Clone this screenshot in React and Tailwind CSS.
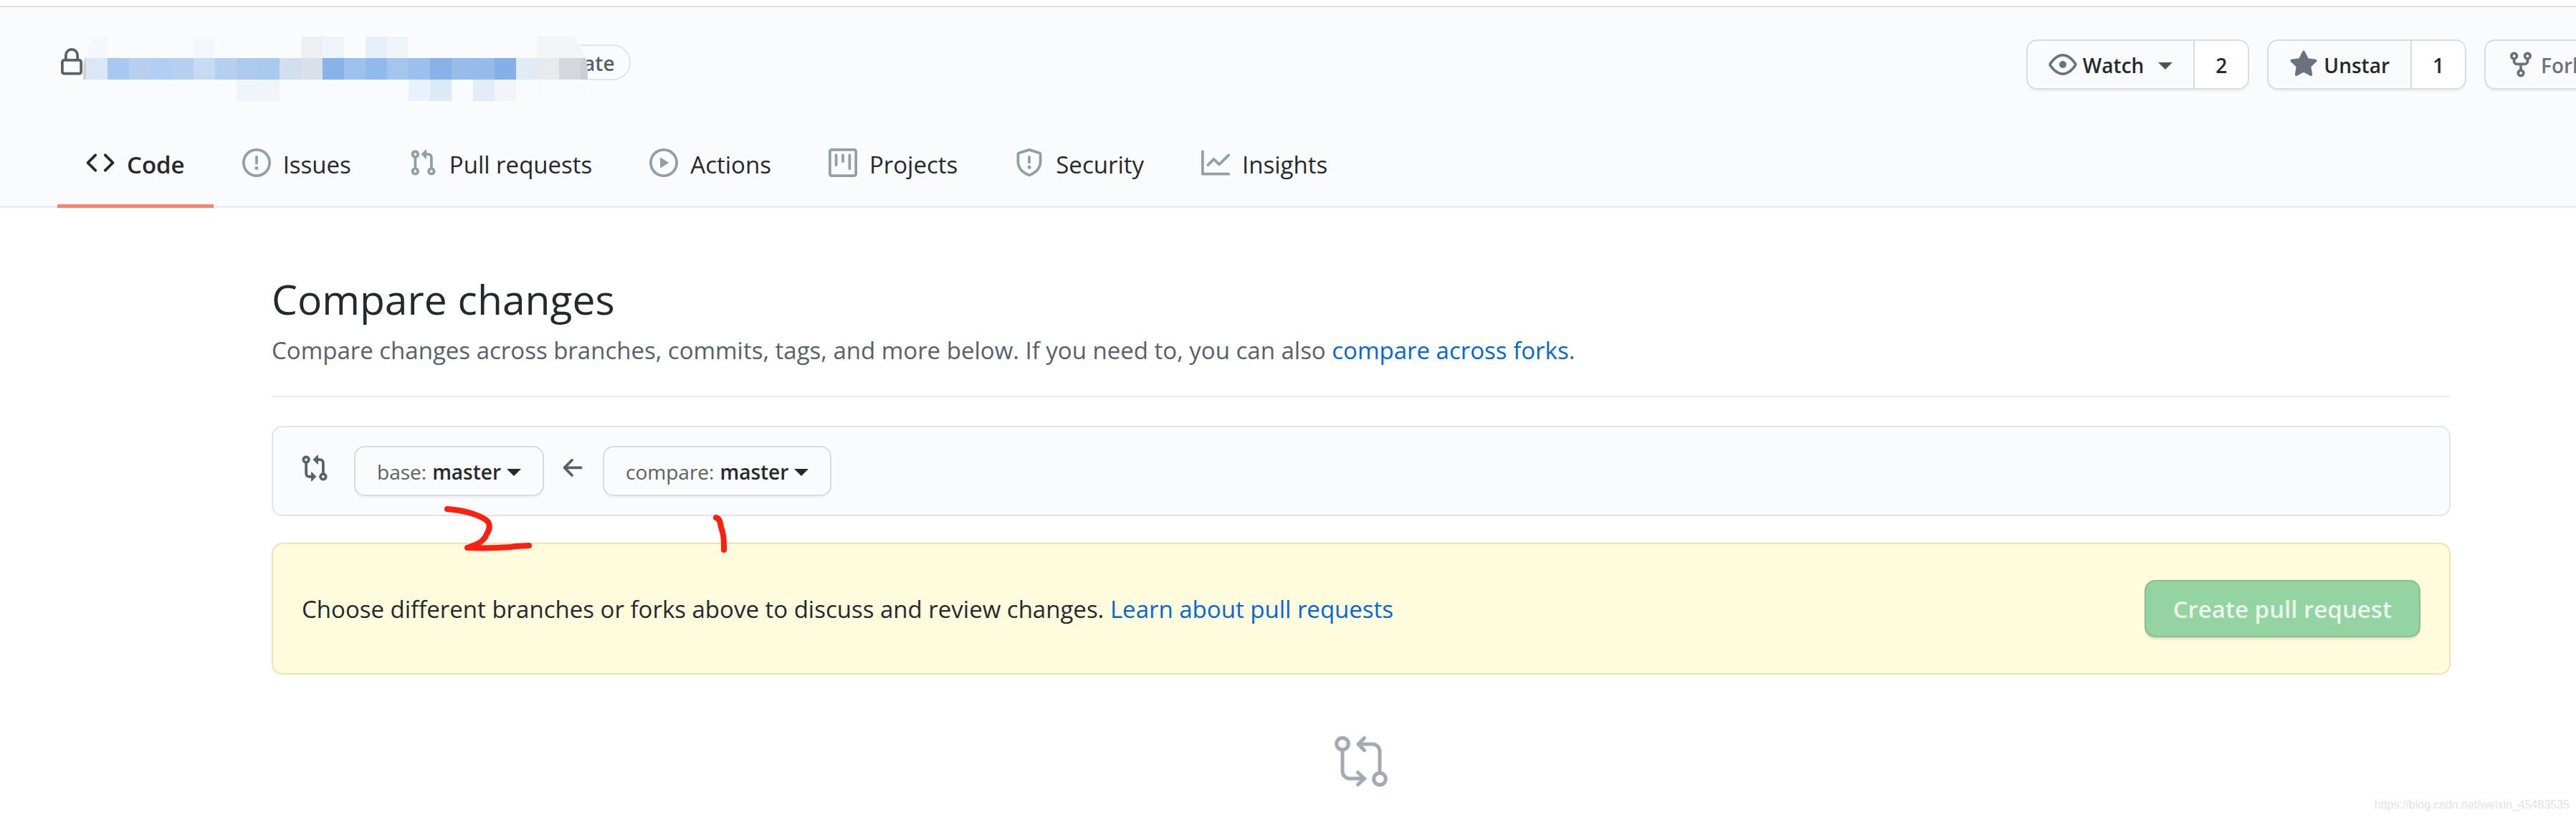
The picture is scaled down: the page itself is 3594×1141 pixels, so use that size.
import React from "react";

const ICONS = {
  lock: "M4 4v2h-.25A1.75 1.75 0 002 7.75v5.5c0 .966.784 1.75 1.75 1.75h8.5A1.75 1.75 0 0014 13.25v-5.5A1.75 1.75 0 0012.25 6H12V4a4 4 0 10-8 0zm6.5 2V4a2.5 2.5 0 10-5 0v2h5zM12 7.5h.25a.25.25 0 01.25.25v5.5a.25.25 0 01-.25.25h-8.5a.25.25 0 01-.25-.25v-5.5a.25.25 0 01.25-.25H12z",
  code: "M4.72 3.22a.75.75 0 011.06 1.06L2.06 8l3.72 3.72a.75.75 0 11-1.06 1.06L.47 8.53a.75.75 0 010-1.06l4.25-4.25zm6.56 0a.75.75 0 10-1.06 1.06L13.94 8l-3.72 3.72a.75.75 0 101.06 1.06l4.25-4.25a.75.75 0 000-1.06l-4.25-4.25z",
  issue: "M8 1.5a6.5 6.5 0 100 13 6.5 6.5 0 000-13zM0 8a8 8 0 1116 0A8 8 0 010 8zm9 3a1 1 0 11-2 0 1 1 0 012 0zm-.25-6.25a.75.75 0 00-1.5 0v3.5a.75.75 0 001.5 0v-3.5z",
  pull: "M7.177 3.073L9.573.677A.25.25 0 0110 .854v4.792a.25.25 0 01-.427.177L7.177 3.427a.25.25 0 010-.354zM3.75 2.5a.75.75 0 100 1.5.75.75 0 000-1.5zm-2.25.75a2.25 2.25 0 113 2.122v5.256a2.251 2.251 0 11-1.5 0V5.372A2.25 2.25 0 011.5 3.25zM11 2.5h-1V4h1a1 1 0 011 1v5.628a2.251 2.251 0 101.5 0V5A2.5 2.5 0 0011 2.5zm1 10.25a.75.75 0 111.5 0 .75.75 0 01-1.5 0zM3.75 12a.75.75 0 100 1.5.75.75 0 000-1.5z",
  play: "M1.5 8a6.5 6.5 0 1113 0 6.5 6.5 0 01-13 0zM8 0a8 8 0 100 16A8 8 0 008 0zM6.379 5.227A.25.25 0 006 5.442v5.117a.25.25 0 00.379.214l4.264-2.559a.25.25 0 000-.428L6.379 5.227z",
  project: "M1.75 0A1.75 1.75 0 000 1.75v12.5C0 15.216.784 16 1.75 16h12.5A1.75 1.75 0 0016 14.25V1.75A1.75 1.75 0 0014.25 0H1.75zM1.5 1.75a.25.25 0 01.25-.25h12.5a.25.25 0 01.25.25v12.5a.25.25 0 01-.25.25H1.75a.25.25 0 01-.25-.25V1.75zM11.75 3a.75.75 0 00-.75.75v7.5a.75.75 0 001.5 0v-7.5a.75.75 0 00-.75-.75zm-8.25.75a.75.75 0 011.5 0v5.5a.75.75 0 01-1.5 0v-5.5zM8 3a.75.75 0 00-.75.75v3.5a.75.75 0 001.5 0v-3.5A.75.75 0 008 3z",
  shield: "M7.467.133a1.75 1.75 0 011.066 0l5.25 1.68A1.75 1.75 0 0115 3.48V7c0 1.566-.32 3.182-1.303 4.682-.983 1.498-2.585 2.813-5.032 3.855a1.7 1.7 0 01-1.33 0c-2.447-1.042-4.049-2.357-5.032-3.855C1.32 10.182 1 8.566 1 7V3.48a1.75 1.75 0 011.217-1.667l5.25-1.68zm.61 1.429a.25.25 0 00-.153 0l-5.25 1.68a.25.25 0 00-.174.238V7c0 1.358.275 2.666 1.057 3.86.784 1.194 2.121 2.34 4.366 3.297a.2.2 0 00.154 0c2.245-.956 3.582-2.104 4.366-3.298C13.225 9.666 13.5 8.36 13.5 7V3.48a.25.25 0 00-.174-.237l-5.25-1.68zM9 10.5a1 1 0 11-2 0 1 1 0 012 0zm-.25-5.75a.75.75 0 10-1.5 0v3a.75.75 0 001.5 0v-3z",
  graph: "M1.5 1.75a.75.75 0 00-1.5 0v12.5c0 .414.336.75.75.75h14.5a.75.75 0 000-1.5H1.5V1.75zm14.28 2.53a.75.75 0 00-1.06-1.06L10 7.94 7.53 5.47a.75.75 0 00-1.06 0L3.22 8.72a.75.75 0 001.06 1.06L7 7.06l2.47 2.47a.75.75 0 001.06 0l5.25-5.25z",
  eye: "M1.679 7.932c.412-.621 1.242-1.75 2.366-2.717C5.175 4.242 6.527 3.5 8 3.5c1.473 0 2.824.742 3.955 1.715 1.124.967 1.954 2.096 2.366 2.717a.119.119 0 010 .136c-.412.621-1.242 1.75-2.366 2.717C10.825 11.758 9.473 12.5 8 12.5c-1.473 0-2.824-.742-3.955-1.715C2.92 9.818 2.09 8.69 1.679 8.068a.119.119 0 010-.136zM8 2c-1.981 0-3.67.992-4.933 2.078C1.797 5.169.88 6.423.43 7.1a1.619 1.619 0 000 1.798c.45.678 1.367 1.932 2.637 3.024C4.329 13.008 6.019 14 8 14c1.981 0 3.67-.992 4.933-2.078 1.27-1.091 2.187-2.345 2.637-3.023a1.619 1.619 0 000-1.798c-.45-.678-1.367-1.932-2.637-3.023C11.671 2.992 9.981 2 8 2zm0 8a2 2 0 100-4 2 2 0 000 4z",
  star: "M8 .25a.75.75 0 01.673.418l1.882 3.815 4.21.612a.75.75 0 01.416 1.279l-3.046 2.97.719 4.192a.75.75 0 01-1.088.791L8 12.347l-3.766 1.98a.75.75 0 01-1.088-.79l.72-4.194L.818 6.374a.75.75 0 01.416-1.28l4.21-.611L7.327.668A.75.75 0 018 .25z",
  fork: "M5 3.25a.75.75 0 11-1.5 0 .75.75 0 011.5 0zm0 2.122a2.25 2.25 0 10-1.5 0v.878A2.25 2.25 0 005.75 8.5h1.5v2.128a2.251 2.251 0 101.5 0V8.5h1.5a2.25 2.25 0 002.25-2.25v-.878a2.25 2.25 0 10-1.5 0v.878a.75.75 0 01-.75.75h-4.5A.75.75 0 015 6.25v-.878zm3.75 7.378a.75.75 0 11-1.5 0 .75.75 0 011.5 0zm3-8.75a.75.75 0 100-1.5.75.75 0 000 1.5z",
  compare: "M9.573.677L7.177 3.073a.25.25 0 000 .354l2.396 2.396A.25.25 0 0010 5.646V4h1a1 1 0 011 1v5.628a2.251 2.251 0 101.5 0V5A2.5 2.5 0 0011 2.5h-1V.854a.25.25 0 00-.427-.177zM6 12v-1.646a.25.25 0 01.427-.177l2.396 2.396a.25.25 0 010 .354l-2.396 2.396A.25.25 0 016 15.146V13.5H5A2.5 2.5 0 012.5 11V5.372a2.25 2.25 0 111.5 0V11a1 1 0 001 1h1zm6.75 0a.75.75 0 100 1.5.75.75 0 000-1.5zM4 3.25a.75.75 0 11-1.5 0 .75.75 0 011.5 0z",
  arrowLeft: "M7.78 12.53a.75.75 0 01-1.06 0L2.47 8.28a.75.75 0 010-1.06l4.25-4.25a.75.75 0 011.06 1.06L4.81 7h7.44a.75.75 0 010 1.5H4.81l2.97 2.97a.75.75 0 010 1.06z",
};

function Icon({ name, className = "" }) {
  return (
    <svg viewBox="0 0 16 16" className={`size-10 shrink-0 fill-current ${className}`} aria-hidden="true">
      <path fillRule="evenodd" d={ICONS[name]} />
    </svg>
  );
}

function Caret({ className = "" }) {
  return (
    <svg viewBox="0 0 20 10" className={`h-[10px] w-5 shrink-0 fill-current ${className}`} aria-hidden="true">
      <path d="M0 0h20L10 10z" />
    </svg>
  );
}

/* Blurred-out repository name: [row, first column, column count, colour] */
const MOSAIC = [
  [0, 0, 1, "#f4f7fd"], [0, 5, 1, "#f4f7fd"], [0, 10, 1, "#edeff4"], [0, 11, 1, "#eef4f9"],
  [0, 13, 1, "#e7f0fa"], [0, 14, 1, "#eef4f8"], [0, 20, 1, "#f9fafb"], [0, 21, 3, "#f4f5f7"],
  [1, -1, 1, "#cfd1d5"], [1, 0, 1, "#dae7f5"], [1, 1, 1, "#a9c8ef"], [1, 2, 1, "#b7d0ef"],
  [1, 3, 1, "#b1cff2"], [1, 4, 1, "#b6d1f0"], [1, 5, 1, "#c6daf3"], [1, 6, 1, "#b3d0ef"],
  [1, 7, 1, "#adcaf0"], [1, 8, 1, "#a9caef"], [1, 9, 1, "#d1e0f0"], [1, 10, 1, "#d9e0e9"],
  [1, 11, 1, "#88b3ea"], [1, 12, 1, "#9dc1ed"], [1, 13, 1, "#90b9ec"], [1, 14, 1, "#a4c6ee"],
  [1, 15, 1, "#9cc0ed"], [1, 16, 1, "#86b2e9"], [1, 17, 1, "#99bbe9"], [1, 18, 1, "#94bbea"],
  [1, 19, 1, "#83b0e8"], [1, 20, 1, "#e1ebf6"], [1, 21, 1, "#e9eaec"], [1, 22, 1, "#d6d7dc"],
  [1, 23, 1, "#cdced2"],
  [2, 7, 2, "#eff5f8"], [2, 9, 1, "#f9fafc"], [2, 15, 1, "#e9f1fa"], [2, 16, 1, "#dce9f6"],
  [2, 18, 1, "#e4ecf8"], [2, 19, 1, "#f1f4f9"], [2, 21, 3, "#f9fafb"],
];

function Mosaic() {
  return (
    <svg viewBox="0 0 704 90" className="relative z-10 mt-[18px] -ml-1 h-[90px] w-[704px] shrink-0" aria-hidden="true">
      <clipPath id="mosaic-edge">
        <path d="M19 0H686Q698 20 702 32L704 50V60L700 90H0V40Q3 18 19 0Z" />
      </clipPath>
      <g clipPath="url(#mosaic-edge)" shapeRendering="crispEdges">
        <rect width="704" height="90" fill="#fafbfd" />
        {MOSAIC.map(([row, col, span, fill]) => (
          <rect key={`${row}-${col}`} x={4 + col * 30} y={row * 30} width={span * 30} height="30" fill={fill} />
        ))}
      </g>
    </svg>
  );
}

const TABS = [
  ["code", "Code"],
  ["issue", "Issues"],
  ["pull", "Pull requests"],
  ["play", "Actions"],
  ["project", "Projects"],
  ["shield", "Security"],
  ["graph", "Insights"],
];

function Tab({ icon, label, active }) {
  return (
    <a
      href="#"
      aria-current={active ? "page" : undefined}
      className={`-mb-[3px] flex h-[121px] items-center gap-[17px] border-b-[5px] px-10 text-[33px] leading-[50px] ${
        active ? "border-[#fb836d] font-semibold" : "border-transparent"
      }`}
    >
      <Icon name={icon} className={active ? "" : "text-[#959da5]"} />
      <span className="pt-1.5">{label}</span>
    </a>
  );
}

function SocialButton({ icon, label, count, caret, muted }) {
  return (
    <div className="flex h-[70px] shrink-0 rounded-[15px] border-2 border-[#d9dbde] text-[28px] font-semibold shadow-[0_3px_0_rgba(27,31,35,0.04)]">
      <button type="button" className={`flex items-center gap-2 px-[29px] ${muted ? "text-[#6a737d]" : ""}`}>
        <Icon name={icon} className="text-[#6a737d]" />
        <span className="pt-0.5">{label}</span>
        {caret && <Caret className="mt-1 ml-3 text-[#505458]" />}
      </button>
      {count && (
        <a href="#" className="flex items-center rounded-r-[13px] border-l-2 border-[#d9dbde] bg-white px-[29px] pt-0.5">
          {count}
        </a>
      )}
    </div>
  );
}

function BranchButton({ kind, branch }) {
  return (
    <button
      type="button"
      aria-haspopup="listbox"
      className="flex h-[70px] items-center gap-2 rounded-[15px] border-2 border-[#d9dbde] bg-[#fafbfc] px-[30px] text-[28px] font-semibold shadow-[0_3px_0_rgba(27,31,35,0.04)]"
    >
      <span className="pt-0.5 font-normal text-[#5d6166]">{kind}:</span>
      <span className="pt-0.5">{branch}</span>
      <Caret className="mt-1" />
    </button>
  );
}

function Annotations() {
  return (
    <svg
      viewBox="600 700 460 80"
      className="pointer-events-none absolute top-[104px] left-[219px] z-10 h-20 w-[460px] fill-none stroke-[#ff2010]"
      strokeWidth="8"
      strokeLinecap="round"
      strokeLinejoin="round"
      aria-hidden="true"
    >
      <path d="M624 710C636 711 648 713 658 716C670 720 677 723 681 728C684 733 683 739 679 745C677 752 668 758 663 761L652 764C676 765 700 764 713 763C722 761 730 762 738 761" />
      <path d="M655 762L670 756" strokeWidth="6" />
      <path d="M999 722C1004 723 1005 729 1006 735C1009 744 1010 748 1010 767" />
    </svg>
  );
}

export default function App() {
  return (
    <div className="relative min-h-screen overflow-hidden bg-white pt-2 font-['Open_Sans',sans-serif] text-[#24292e]">
      <header className="border-t-2 border-b-[3px] border-t-[#e1e4e8] border-b-[#eaecef] bg-[#fafbfd] pt-[45px]">
        <div className="flex items-start justify-between pl-20">
          <div className="mt-[7px] flex h-[50px] items-center">
            <Icon name="lock" className="text-[#586069]" />
            <Mosaic />
            <span className="-ml-[80px] flex h-[50px] items-center rounded-full border-2 border-[#e1e4e8] px-5 pt-0.5 text-[28px] font-semibold text-[#586069]">
              Private
            </span>
          </div>
          <div className="flex gap-[25px]">
            <SocialButton icon="eye" label="Watch" count="2" caret />
            <SocialButton icon="star" label="Unstar" count="1" />
            <div className="flex w-32">
              <SocialButton icon="fork" label="Fork" count="0" muted />
            </div>
          </div>
        </div>
        <nav className="mt-11 flex pl-20" aria-label="Repository">
          {TABS.map(([icon, label], i) => (
            <Tab key={label} icon={icon} label={label} active={i === 0} />
          ))}
        </nav>
      </header>

      <main className="pt-[90px] pr-[175px] pl-[379px] text-[33px]">
        <div className="border-b-2 border-[#eaecef] pb-[37px]">
          <h1 className="text-[57px] leading-[75px]">Compare changes</h1>
          <p className="mt-2 leading-[52px] text-[#586069]">
            Compare changes across branches, commits, tags, and more below. If you need to, you can also{" "}
            <a href="#" className="text-[#0366d6]">compare across forks</a>.
          </p>
        </div>

        <section className="relative mt-10 flex items-center rounded-[15px] border-2 border-[#e1e4e8] bg-[#fafbfd] px-[38px] py-[26px]">
          <Icon name="compare" className="mr-[35px] mb-2 text-[#586069]" />
          <BranchButton kind="base" branch="master" />
          <Icon name="arrowLeft" className="mx-[21px] mb-2 text-[#586069]" />
          <BranchButton kind="compare" branch="master" />
          <Annotations />
        </section>

        <section className="mt-[37px] flex items-center justify-between rounded-[15px] border-2 border-[#efe2b0] bg-[#fffbdd] px-10 py-[50px]">
          <p className="pt-0.5">
            Choose different branches or forks above to discuss and review changes.{" "}
            <a href="#" className="text-[#0366d6]">Learn about pull requests</a>
          </p>
          <button
            type="button"
            disabled
            className="h-20 rounded-[15px] border-2 border-[#85be91] bg-[#94d3a2] px-[38px] pt-0.5 font-semibold text-[#eaf6ec] shadow-[0_3px_0_rgba(27,31,35,0.1)]"
          >
            Create pull request
          </button>
        </section>

        <svg
          viewBox="60 25 78 74"
          className="mx-auto mt-[84px] h-[74px] w-[78px] fill-none stroke-[#a3aab1]"
          strokeWidth="5"
          strokeLinecap="round"
          strokeLinejoin="round"
          aria-hidden="true"
        >
          <circle cx="73" cy="37.5" r="8.3" />
          <circle cx="125" cy="86.5" r="8.3" />
          <path d="M73 46V76a10 10 0 0 0 10 10H104M94.5 77.5L103.5 86L94.5 94.5" />
          <path d="M125 78V48a10 10 0 0 0 -10 -10H95M103.5 29.5L95 38L103.5 46.5" />
        </svg>
      </main>

      <p className="absolute right-[9px] bottom-[6px] font-['Liberation_Sans',sans-serif] text-base text-[#e2e2e2]">
        https://blog.csdn.net/weixin_45483535
      </p>
    </div>
  );
}
